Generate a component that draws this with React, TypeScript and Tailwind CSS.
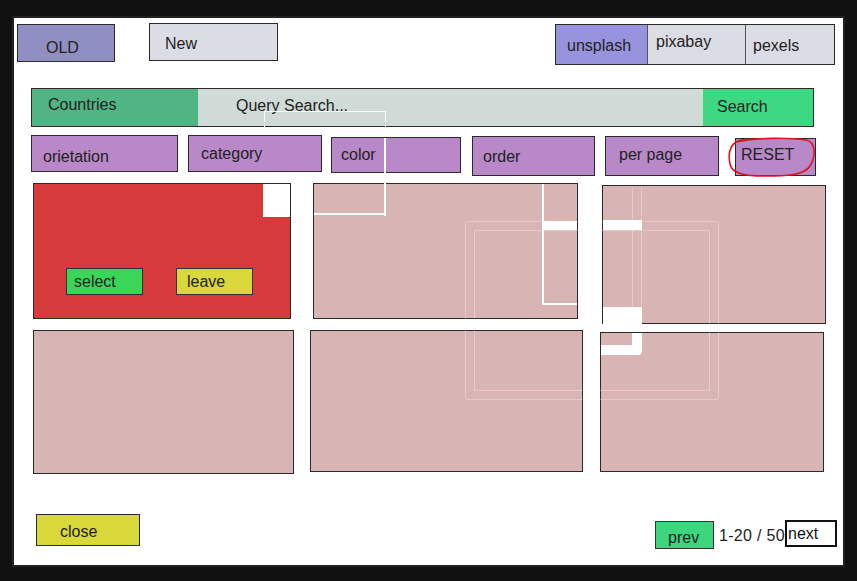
import React from "react";

const font = { fontFamily: '"Liberation Sans", Arial, sans-serif' };

function Box({
  className,
  label,
  textClass = "",
}: {
  className: string;
  label?: string;
  textClass?: string;
}) {
  return (
    <div className={`flex shrink-0 border border-[#2a2a2a] ${className}`}>
      {label && <span className={`text-[16px] leading-none text-[#222] ${textClass}`}>{label}</span>}
    </div>
  );
}

export default function App() {
  return (
    <div className="relative h-[581px] w-[857px] overflow-hidden bg-[#111]" style={font}>
      <div className="ml-[12px] pt-[16px]">
        <div className="flex h-[551px] w-[833px] flex-col border-2 border-[#222] bg-white">
          {/* top row */}
          <div className="mt-[5px] flex items-start">
            <Box className="ml-[3px] mt-[1px] h-[38px] w-[98px] bg-[#8f8fc2]" label="OLD" textClass="ml-[28px] mt-[15px]" />
            <Box className="ml-[34px] h-[38px] w-[129px] bg-[#dcdce4]" label="New" textClass="ml-[15px] mt-[12px]" />
            <div className="ml-auto mr-[8px] mt-[1px] flex h-[41px] border border-[#2a2a2a]">
              <div className="flex w-[91px] bg-[#9793dd]">
                <span className="ml-[11px] mt-[13px] text-[16px] leading-none text-[#222]">unsplash</span>
              </div>
              <div className="flex w-[98px] border-l border-[#555] bg-[#dcdce4]">
                <span className="ml-[8px] mt-[9px] text-[16px] leading-none text-[#222]">pixabay</span>
              </div>
              <div className="flex w-[89px] border-l border-[#555] bg-[#dcdce4]">
                <span className="ml-[7px] mt-[13px] text-[16px] leading-none text-[#222]">pexels</span>
              </div>
            </div>
          </div>

          {/* search row */}
          <div className="ml-[17px] mt-[23px] flex h-[39px] w-[783px] border border-[#2a2a2a]">
            <div className="flex w-[166px] bg-[#50b484]">
              <span className="ml-[16px] mt-[8px] text-[16px] leading-none text-[#222]">Countries</span>
            </div>
            <div className="flex w-[505px] bg-[#d0dbd7]">
              <span className="ml-[38px] mt-[9px] text-[16px] leading-none text-[#222]">Query Search...</span>
            </div>
            <div className="flex flex-1 bg-[#3dd982]">
              <span className="ml-[14px] mt-[10px] text-[16px] leading-none text-[#222]">Search</span>
            </div>
          </div>

          {/* filters */}
          <div className="mt-[8px] flex items-start">
            <Box className="ml-[17px] h-[37px] w-[147px] bg-[#b888c8]" label="orietation" textClass="ml-[11px] mt-[13px]" />
            <Box className="ml-[10px] h-[37px] w-[134px] bg-[#b888c8]" label="category" textClass="ml-[12px] mt-[10px]" />
            <Box className="ml-[9px] mt-[2px] h-[36px] w-[130px] bg-[#b888c8]" label="color" textClass="ml-[9px] mt-[9px]" />
            <Box className="ml-[11px] mt-[1px] h-[40px] w-[123px] bg-[#b888c8]" label="order" textClass="ml-[10px] mt-[12px]" />
            <Box className="ml-[10px] mt-[1px] h-[40px] w-[114px] bg-[#b888c8]" label="per page" textClass="ml-[13px] mt-[10px]" />
            <Box className="ml-[16px] mt-[3px] h-[38px] w-[81px] bg-[#b888c8]" label="RESET" textClass="ml-[5px] mt-[8px]" />
          </div>

          {/* cards row 1 */}
          <div className="mt-[7px] flex items-start">
            <div className="relative ml-[19px] h-[136px] w-[258px] shrink-0 border border-[#2a2a2a] bg-[#d63a3a]">
              <div className="absolute right-0 top-0 h-[33px] w-[27px] bg-white" />
              <div className="absolute left-[32px] top-[84px] flex gap-[33px]">
                <div className="flex h-[27px] w-[77px] border border-[#333] bg-[#3ad65a]">
                  <span className="ml-[7px] mt-[5px] text-[16px] leading-none text-[#222]">select</span>
                </div>
                <div className="flex h-[27px] w-[77px] border border-[#333] bg-[#d8d83a]">
                  <span className="ml-[10px] mt-[5px] text-[16px] leading-none text-[#222]">leave</span>
                </div>
              </div>
            </div>
            <div className="ml-[22px] h-[136px] w-[265px] shrink-0 border border-[#2a2a2a] bg-[#d8b4b4]" />
            <div className="ml-[24px] mt-[2px] h-[139px] w-[224px] shrink-0 border border-[#2a2a2a] bg-[#d8b4b4]" />
          </div>

          {/* cards row 2 */}
          <div className="mt-[6px] flex items-start">
            <div className="ml-[19px] h-[144px] w-[261px] shrink-0 border border-[#2a2a2a] bg-[#d8b4b4]" />
            <div className="ml-[16px] h-[142px] w-[273px] shrink-0 border border-[#2a2a2a] bg-[#d8b4b4]" />
            <div className="ml-[17px] mt-[2px] h-[140px] w-[224px] shrink-0 border border-[#2a2a2a] bg-[#d8b4b4]" />
          </div>

          {/* bottom */}
          <div className="mt-[40px] flex items-start">
            <Box className="ml-[22px] h-[32px] w-[104px] bg-[#d8d83a]" label="close" textClass="ml-[23px] mt-[9px]" />
            <div className="ml-auto mr-[6px] flex items-start">
              <div className="mt-[7px] flex h-[28px] w-[59px] border border-[#333] bg-[#3dd67f]">
                <span className="ml-[12px] mt-[8px] text-[16px] leading-none text-[#222]">prev</span>
              </div>
              <span className="ml-[5px] mt-[14px] w-[66px] text-[16px] leading-none tracking-[0.3px] text-[#222]">1-20 / 50</span>
              <div className="mt-[6px] flex h-[27px] w-[52px] border-2 border-[#111] bg-white">
                <span className="ml-[1px] mt-[4px] text-[16px] leading-none text-[#111]">next</span>
              </div>
            </div>
          </div>
        </div>
      </div>

      {/* red scribble around RESET */}
      <svg className="pointer-events-none absolute left-[724px] top-[134px]" width="96" height="48" viewBox="0 0 96 48">
        <path
          d="M12 8 C30 4 62 3 82 6 C92 8 92 22 86 32 C80 42 60 42 40 42 C22 42 8 40 6 30 C4 20 6 12 12 8 C16 6 20 5 24 6"
          fill="none"
          stroke="#e0141e"
          strokeWidth="1.6"
          strokeLinecap="round"
        />
      </svg>

      {/* ghost outlines left over on the sketch */}
      <div className="pointer-events-none absolute left-[264px] top-[111px] h-[16px] w-[122px] border-x-[1.5px] border-t-[1.5px] border-white/90" />
      <div className="pointer-events-none absolute left-[384px] top-[138px] h-[78px] w-[2px] bg-white" />
      <div className="pointer-events-none absolute left-[314px] top-[213px] h-[2px] w-[72px] bg-white" />
      <div className="pointer-events-none absolute left-[542px] top-[184px] h-[121px] w-[35px] border-b-2 border-l-2 border-white" />
      <div className="pointer-events-none absolute left-[543px] top-[221px] h-[9px] w-[34px] bg-white" />
      <div className="pointer-events-none absolute left-[465px] top-[221px] h-[179px] w-[254px] rounded-[3px] border border-white/30" />
      <div className="pointer-events-none absolute left-[474px] top-[230px] h-[161px] w-[236px] border border-white/30" />
      <div className="pointer-events-none absolute left-[603px] top-[220px] h-[10px] w-[39px] bg-white" />
      <div className="pointer-events-none absolute left-[603px] top-[307px] h-[17px] w-[39px] bg-white" />
      <div className="pointer-events-none absolute left-[632px] top-[187px] h-[138px] w-[10px] border-x border-white/30" />
      <div className="pointer-events-none absolute left-[601px] top-[333px] h-[22px] w-[41px] rounded-br-[4px] bg-white">
        <div className="h-[12px] w-[31px] bg-[#d8b4b4]" />
      </div>
    </div>
  );
}
